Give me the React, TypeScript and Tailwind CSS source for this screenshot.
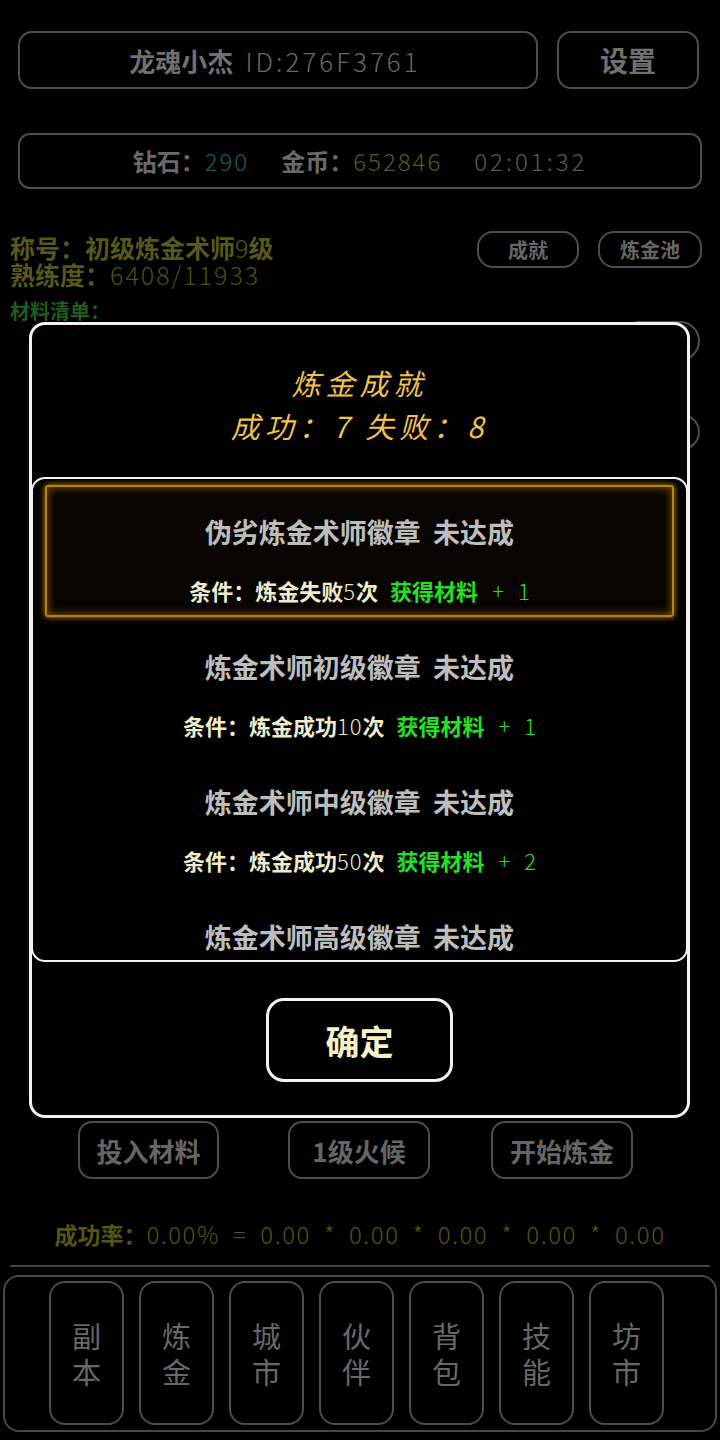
import React from "react";

const F = { fontFamily: '"Noto Sans CJK SC", "Noto Sans", sans-serif' } as React.CSSProperties;

function Item({ title, cond, num, reward, highlight }: { title: string; cond?: string; num?: string; reward?: string; highlight?: boolean }) {
  return (
    <div
      className={
        "h-[132px] shrink-0 flex flex-col items-center rounded-[3px] " +
        (highlight
          ? "border-2 border-[#b8820f] bg-[#070401] shadow-[0_0_6px_#c08a18,inset_0_0_10px_#8a5a08]"
          : "border-2 border-transparent")
      }
    >
      <div className="mt-[28px] h-[34px] leading-[34px] text-[27px] font-bold text-[#bdbdbd] whitespace-pre">{title}</div>
      {cond && (
        <div className="mt-[24px] h-[34px] leading-[34px] text-[22px] whitespace-pre flex items-center">
          <span className="font-bold text-[#efeccd]">{cond}</span>
          <span className="text-[#efeccd] tracking-[1px] font-light">{num}</span>
          <span className="font-bold text-[#efeccd]">次</span>
          <span className="font-bold text-[#25e025] ml-[12px]">获得材料</span>
          <span className="text-[#25e025] ml-[14px] font-light">+</span>
          <span className="text-[#25e025] ml-[14px] font-light">{reward}</span>
        </div>
      )}
    </div>
  );
}

export default function App() {
  const nav = [
    ["副", "本"],
    ["炼", "金"],
    ["城", "市"],
    ["伙", "伴"],
    ["背", "包"],
    ["技", "能"],
    ["坊", "市"],
  ];
  return (
    <div style={F} className="relative w-[720px] h-[1440px] bg-black overflow-hidden">
      {/* background page */}
      <div className="flex flex-col">
        <div className="flex pt-[31px] pl-[18px]">
          <div className="w-[520px] h-[58px] border-2 border-[#4d4d4d] rounded-[14px] flex items-center justify-center pr-[6px] text-[26px]">
            <span className="font-bold text-[#707070]">龙魂小杰</span>
            <span className="ml-[12px] text-[#686868] font-light tracking-[3px]">ID:276F3761</span>
          </div>
          <div className="ml-[19px] w-[142px] h-[58px] border-2 border-[#4d4d4d] rounded-[14px] flex items-center justify-center text-[28px] font-bold text-[#707070]">
            设置
          </div>
        </div>
        <div className="mt-[44px] ml-[18px] w-[684px] h-[56px] border-2 border-[#4d4d4d] rounded-[12px] flex items-center justify-center text-[24px]">
          <span className="font-bold text-[#6a6a6a]">钻石：</span>
          <span className="text-[#1b5c5a] font-light tracking-[2px]">290</span>
          <span className="ml-[32px] font-bold text-[#6a6a6a]">金币：</span>
          <span className="text-[#5c5a1c] font-light tracking-[2px]">652846</span>
          <span className="ml-[32px] text-[#5a5a5a] font-light tracking-[3px]">02:01:32</span>
        </div>
        <div className="flex mt-[42px]">
          <div className="ml-[10px] flex flex-col">
            <div className="mt-[3px] h-[27px] leading-[27px] text-[25px] font-bold text-[#58581a]">
              称号：初级炼金术师<span className="font-light">9</span>级
            </div>
            <div className="h-[27px] leading-[27px] text-[25px] text-[#4f4f16]">
              <span className="font-bold text-[#58581a]">熟练度：</span>
              <span className="font-light tracking-[2px]">6408/11933</span>
            </div>
            <div className="mt-[11px] h-[24px] leading-[24px] text-[20px] font-bold text-[#1c5e1c]">材料清单：</div>
          </div>
          <div className="ml-auto flex gap-[19px] pr-[18px]">
            <div className="w-[102px] h-[37px] border-2 border-[#4d4d4d] rounded-[16px] flex items-center justify-center text-[20px] font-bold text-[#666]">成就</div>
            <div className="w-[104px] h-[37px] border-2 border-[#4d4d4d] rounded-[16px] flex items-center justify-center text-[20px] font-bold text-[#666]">炼金池</div>
          </div>
        </div>
        <div className="flex justify-end pr-[20px] mt-[-2px]">
          <div className="w-[80px] h-[40px] border-2 border-[#4d4d4d] rounded-full" />
        </div>
        <div className="flex justify-end pr-[20px] mt-[53px]">
          <div className="w-[80px] h-[36px] border-2 border-[#4d4d4d] rounded-full" />
        </div>
        <div className="h-[671px]" />
        <div className="flex ml-[78px]">
          <div className="w-[141px] h-[58px] border-2 border-[#4d4d4d] rounded-[14px] flex items-center justify-center text-[26px] font-bold text-[#666]">投入材料</div>
          <div className="ml-[69px] w-[142px] h-[58px] border-2 border-[#4d4d4d] rounded-[14px] flex items-center justify-center text-[26px] font-bold text-[#666]">1级火候</div>
          <div className="ml-[61px] w-[142px] h-[58px] border-2 border-[#4d4d4d] rounded-[14px] flex items-center justify-center text-[26px] font-bold text-[#666]">开始炼金</div>
        </div>
        <div className="mt-[40px] h-[30px] leading-[30px] flex items-center justify-center gap-[13px] text-[24px] text-[#56560f] font-light tracking-[1.5px]">
          <span className="font-bold text-[23px] tracking-normal -mr-[13px]">成功率：</span>
          <span>0.00%</span>
          <span>=</span>
          <span>0.00</span>
          <span>*</span>
          <span>0.00</span>
          <span>*</span>
          <span>0.00</span>
          <span>*</span>
          <span>0.00</span>
          <span>*</span>
          <span>0.00</span>
        </div>
        <div className="mt-[16px] mx-[10px] h-[2px] bg-[#444] rounded" />
        <div className="mt-[8px] mx-[3px] h-[157px] border-2 border-[#484848] rounded-[16px] flex pl-[44px] gap-[15px] pt-[4px]">
          {nav.map((n, i) => (
            <div key={i} className="w-[75px] h-[144px] border-2 border-[#4d4d4d] rounded-[16px] flex flex-col items-center justify-center text-[29px] leading-[36px] text-[#686868]">
              <span>{n[0]}</span>
              <span>{n[1]}</span>
            </div>
          ))}
        </div>
      </div>

      {/* modal */}
      <div className="absolute left-[29px] top-[322px] w-[661px] h-[796px] border-[3px] border-[#f2f2f2] rounded-[16px] bg-black flex flex-col items-center">
        <div
          className="mt-[36px] flex flex-col items-center text-[#f1c150] italic"
          style={{ fontFamily: '"Noto Sans CJK SC", serif' }}
        >
          <div className="h-[43px] leading-[43px] text-[29px] tracking-[5px]">炼金成就</div>
          <div className="h-[43px] leading-[43px] text-[29px] tracking-[5px] whitespace-pre">成功：7 失败：8</div>
        </div>
        <div className="mt-[30px] w-[657px] -mx-[1px] h-[485px] border-[2px] border-[#f2f2f2] rounded-[14px] overflow-hidden flex flex-col gap-[3px] px-[12px] pt-[6px]">
          <Item highlight title="伪劣炼金术师徽章  未达成" cond="条件：炼金失败" num="5" reward="1" />
          <Item title="炼金术师初级徽章  未达成" cond="条件：炼金成功" num="10" reward="1" />
          <Item title="炼金术师中级徽章  未达成" cond="条件：炼金成功" num="50" reward="2" />
          <Item title="炼金术师高级徽章  未达成" />
        </div>
        <div className="mt-[36px] w-[187px] h-[84px] border-[3px] border-[#f2f2f2] rounded-[18px] flex items-center justify-center text-[34px] font-bold text-[#f5f0c8]">
          确定
        </div>
      </div>
    </div>
  );
}
